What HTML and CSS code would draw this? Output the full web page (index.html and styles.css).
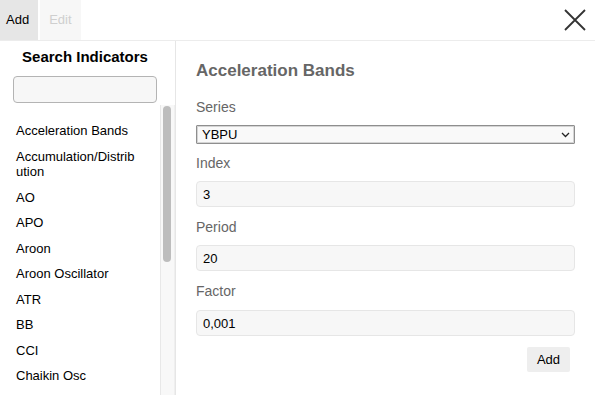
FILE: index.html
```html
<!DOCTYPE html>
<html>
<head>
<meta charset="utf-8">
<link rel="stylesheet" href="styles.css">
</head>
<body>
<div class="popup">
  <div class="header">
    <div class="tab tab-active">Add</div>
    <div class="tab tab-disabled">Edit</div>
    <button class="close" aria-label="Close">
      <svg width="24" height="24" viewBox="0 0 24 24"><path d="M2 2 L22 22 M22 2 L2 22" stroke="#333" stroke-width="1.8" fill="none"/></svg>
    </button>
  </div>
  <div class="body">
    <div class="left">
      <div class="search">
        <div class="search-title">Search Indicators</div>
        <input class="search-input" type="text">
      </div>
      <div class="list-row">
        <ul class="list">
          <li>Acceleration Bands</li>
          <li>Accumulation/Distribution</li>
          <li>AO</li>
          <li>APO</li>
          <li>Aroon</li>
          <li>Aroon Oscillator</li>
          <li>ATR</li>
          <li>BB</li>
          <li>CCI</li>
          <li>Chaikin Osc</li>
        </ul>
        <div class="scrollbar"><div class="thumb"></div></div>
      </div>
    </div>
    <div class="right">
      <h3 class="title">Acceleration Bands</h3>
      <div class="field">
        <label class="label">Series</label>
        <div class="select-wrap">
          <select class="select"><option>YBPU</option></select>
          <svg class="chevron" width="9" height="6" viewBox="0 0 9 6"><path d="M1 1 L4.5 4.5 L8 1" stroke="#222" stroke-width="1.3" fill="none"/></svg>
        </div>
      </div>
      <div class="field">
        <label class="label">Index</label>
        <input class="input" type="text" value="3">
      </div>
      <div class="field">
        <label class="label">Period</label>
        <input class="input" type="text" value="20">
      </div>
      <div class="field field-last">
        <label class="label">Factor</label>
        <input class="input" type="text" value="0,001">
      </div>
      <div class="actions">
        <button class="btn">Add</button>
      </div>
    </div>
  </div>
</div>
</body>
</html>
```

FILE: styles.css
```css
* { box-sizing: border-box; }
html, body { margin: 0; padding: 0; background: #fff; }
body { font-family: "Liberation Sans", Arial, sans-serif; color: #000; }

.popup {
  width: 595px;
  height: 395px;
  display: flex;
  flex-direction: column;
  overflow: hidden;
}

.header {
  height: 41px;
  display: flex;
  align-items: stretch;
  border-bottom: 1px solid #ececec;
}
.tab {
  height: 40px;
  line-height: 40px;
  font-size: 13px;
  padding: 0 9px;
}
.tab-active { background: #e6e6e6; padding-left: 6px; color: #000; margin-right: 2px; }
.tab-disabled { background: #f7f7f7; color: #cfcfcf; }
.close {
  margin-left: auto;
  margin-right: 7px;
  margin-top: 7px;
  width: 26px;
  height: 26px;
  padding: 0;
  border: 0;
  background: transparent;
  display: flex;
  align-items: center;
  justify-content: center;
}

.body { flex: 1; display: flex; min-height: 0; }

.left {
  width: 176px;
  border-right: 1px solid #e6e6e6;
  display: flex;
  flex-direction: column;
  min-height: 0;
}
.search { padding: 7px 18px 0 13px; }
.search-title {
  font-size: 15px;
  font-weight: bold;
  line-height: 18px;
  text-align: center;
  margin-bottom: 10px;
}
.search-input {
  display: block;
  width: 144px;
  height: 27px;
  border: 1px solid #b4b4b4;
  border-radius: 4px;
  background: #f7f7f7;
  margin: 0;
}
.list-row {
  flex: 1;
  min-height: 0;
  display: flex;
  margin-top: 2px;
}
.list {
  flex: 1;
  min-width: 0;
  overflow: hidden;
  list-style: none;
  margin: 0;
  padding: 13px 20px 0 16px;
  font-size: 13px;
}
.list li {
  line-height: 15.5px;
  padding: 5px 0;
  overflow-wrap: anywhere;
  word-break: break-all;
}
.scrollbar {
  width: 15px;
  flex: none;
  background: #f8f8f8;
  border-left: 1px solid #e8e8e8;
  border-right: 1px solid #efefef;
  padding: 1px 0 0 2px;
}
.thumb {
  width: 8px;
  height: 156px;
  border-radius: 4px;
  background: #bdbdbd;
}

.right {
  flex: 1;
  padding: 20px 20px 0 20px;
  color: #666;
}
.title {
  margin: 0 0 18px 0;
  font-size: 17px;
  line-height: 20px;
  font-weight: bold;
  color: #666;
}
.field { display: flex; flex-direction: column; margin-bottom: 11px; }
.field-last .label { margin-bottom: 10px; }
.field-last { margin-bottom: 10px; }
.label {
  font-size: 14px;
  line-height: 17px;
  margin-bottom: 9px;
  color: #666;
}
.select-wrap { position: relative; height: 19px; }
.select {
  appearance: none;
  -webkit-appearance: none;
  width: 100%;
  height: 19px;
  border: 1px solid #8e8e8e;
  box-shadow: inset 0 0 0 1px #d4d4d4;
  border-radius: 1px;
  background: #f9f9f9;
  font-family: "Liberation Sans", Arial, sans-serif;
  font-size: 13px;
  color: #000;
  padding: 0 0 0 5px;
  margin: 0;
}
.chevron { position: absolute; right: 5px; top: 7px; }
.input {
  height: 26px;
  border: 1px solid #e6e6e6;
  border-radius: 4px;
  background: #f7f7f7;
  font-family: "Liberation Sans", Arial, sans-serif;
  font-size: 13px;
  color: #000;
  padding: 0 6px;
  margin: 0 0 1px 0;
}
.actions { display: flex; justify-content: flex-end; padding-right: 5px; margin-top: 1px; }
.btn {
  width: 43px;
  height: 25px;
  border: 0;
  border-radius: 2px;
  background: #eeeeee;
  font-family: "Liberation Sans", Arial, sans-serif;
  font-size: 13px;
  color: #000;
  padding: 0;
}
```
